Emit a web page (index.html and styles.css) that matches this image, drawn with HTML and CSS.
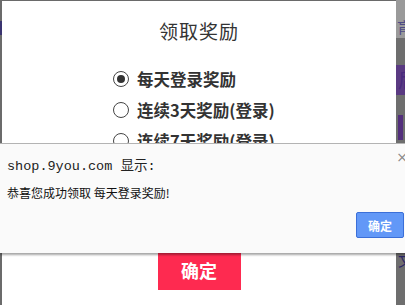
FILE: index.html
```html
<!DOCTYPE html>
<html lang="zh">
<head>
<meta charset="utf-8">
<link rel="stylesheet" href="styles.css">
</head>
<body>
<div class="page">
  <div class="edge edge-left">
    <div class="frag frag-l1"></div>
  </div>
  <div class="modal">
    <h1 class="title">领取奖励</h1>
    <ul class="options">
      <li class="option"><span class="radio checked"></span><span class="label">每天登录奖励</span></li>
      <li class="option"><span class="radio"></span><span class="label">连续3天奖励(登录)</span></li>
      <li class="option"><span class="radio"></span><span class="label">连续7天奖励(登录)</span></li>
    </ul>
    <div class="actions"><button class="confirm">确定</button></div>
  </div>
  <div class="edge edge-right">
    <div class="light">肓</div>
    <div class="frag frag-r1">后</div>
    <div class="frag frag-r2"></div>
    <div class="frag frag-r3">文</div>
  </div>
</div>

<div class="alert">
  <div class="alert-head">shop.9you.com 显示:</div>
  <div class="alert-msg">恭喜您成功领取 每天登录奖励!</div>
  <div class="alert-foot"><button class="alert-ok">确定</button></div>
  <span class="alert-close">×</span>
</div>
</body>
</html>
```

FILE: styles.css
```css
* { box-sizing: border-box; }
html, body { margin: 0; padding: 0; }
body {
  width: 405px;
  height: 305px;
  overflow: hidden;
  background: #6a6a6a;
  font-family: "Noto Sans CJK SC", sans-serif;
  position: relative;
}
.page {
  display: flex;
  height: 305px;
}
.edge { flex: none; position: relative; overflow: hidden; }
.edge-left { width: 2px; background: #6b6b6b; }
.edge-right { width: 9px; background: #6e6e6e; }
.frag-l1 {
  margin-top: 21px;
  width: 2px; height: 14px;
  background: #3a3470;
}
.light {
  height: 38px;
  background: #9a9a9a;
  color: #4e4a86;
  font-size: 15px;
  line-height: 15px;
  padding-top: 19px;
  padding-left: 1px;
  overflow: hidden;
  white-space: nowrap;
}
.frag-r1 {
  margin-top: 27px;
  height: 30px;
  color: #4a2a7e;
  background: #5a3a82;
  font-size: 20px;
  line-height: 30px;
  padding-left: 2px;
  overflow: hidden;
  width: 9px;
}
.frag-r2 {
  margin-top: 20px;
  margin-left: 2px;
  width: 5px;
  height: 25px;
  background: #532f7c;
}
.frag-r3 {
  margin-top: 112px;
  color: #2a2466;
  font-size: 15px;
  line-height: 16px;
  padding-left: 2px;
  white-space: nowrap;
}
.modal {
  flex: none;
  width: 394px;
  margin-top: 1px;
  background: #fff;
  display: flex;
  flex-direction: column;
  align-items: center;
}
.title {
  margin: 17px 0 0;
  font-size: 19px;
  line-height: 26px;
  font-weight: 400;
  color: #333;
  letter-spacing: 1px;
}
.options {
  list-style: none;
  margin: 23px 0 0;
  padding: 0 0 0 111px;
  align-self: stretch;
  display: flex;
  flex-direction: column;
  gap: 7px;
}
.option {
  display: flex;
  align-items: center;
  gap: 8px;
  height: 24px;
}
.radio {
  width: 16px; height: 16px;
  border: 1.5px solid #444;
  border-radius: 50%;
  display: flex;
  align-items: center;
  justify-content: center;
  flex: none;
}
.radio.checked::after {
  content: "";
  width: 8px; height: 8px;
  border-radius: 50%;
  background: #333;
}
.label {
  font-size: 16.5px;
  font-weight: 700;
  color: #333;
  line-height: 24px;
  white-space: nowrap;
}
.actions {
  margin-top: 97px;
}
.confirm {
  width: 83px;
  height: 40px;
  border: 0;
  background: #fe2a50;
  color: #fff;
  font-family: "Noto Sans CJK SC", sans-serif;
  font-size: 18px;
  font-weight: 700;
  padding: 0;
}
.alert {
  position: absolute;
  left: 0; top: 143px;
  width: 405px;
  height: 110px;
  background: #fafafa;
  border-top: 1px solid #b3b3b3;
  box-shadow: 0 2px 2px rgba(0,0,0,0.35);
  padding: 14px 0 0 7px;
}
.alert-head {
  font-family: "Liberation Mono", "Noto Sans CJK SC", monospace;
  font-size: 13.5px;
  line-height: 18px;
  color: #222;
}
.alert-msg {
  margin-top: 9px;
  font-size: 12px;
  line-height: 16px;
  color: #111;
}
.alert-foot {
  display: flex;
  justify-content: flex-end;
  margin-top: 11px;
}
.alert-ok {
  width: 48px;
  height: 26px;
  margin-right: 1px;
  background: #6298f7;
  border: 1px solid #3b6fd8;
  border-radius: 2px;
  color: #fff;
  font-family: "Noto Sans CJK SC", sans-serif;
  font-size: 12px;
  font-weight: 700;
  padding: 0;
}
.alert-close {
  position: absolute;
  right: -3px;
  top: 6px;
  font-size: 14px;
  line-height: 14px;
  color: #888;
  font-family: "DejaVu Sans", sans-serif;
}
```
